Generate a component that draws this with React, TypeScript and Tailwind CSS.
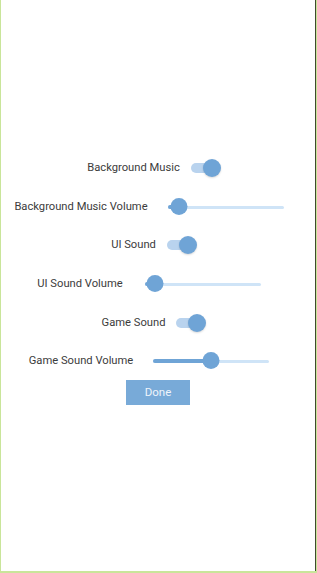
import { useState } from 'react';

function Toggle({ on }: { on: boolean }) {
  return (
    <div className="relative h-[18px] w-[30px] shrink-0">
      <div className="absolute left-[0px] top-[4px] h-[10px] w-[26px] rounded-full bg-[#b9d3ee]" />
      <div
        className={
          on
            ? 'absolute right-[0px] top-[0px] h-[18px] w-[18px] rounded-full bg-[#6fa4d6] shadow-[0_1px_2px_rgba(0,0,0,0.15)]'
            : 'absolute left-[0px] top-[0px] h-[18px] w-[18px] rounded-full bg-[#f5f5f5] shadow-[0_1px_2px_rgba(0,0,0,0.25)]'
        }
      />
    </div>
  );
}

function Slider({ value }: { value: number }) {
  const pct = value * 100;
  return (
    <div className="relative h-[18px] w-[116px] shrink-0">
      <div className="absolute left-0 right-0 top-[8px] h-[3px] rounded-full bg-[#cfe4f7]" />
      <div
        className="absolute left-0 top-[7px] h-[4px] rounded-full bg-[#6fa4d6]"
        style={{ width: `${pct}%` }}
      />
      <div
        className="absolute top-0 h-[17px] w-[17px] -translate-x-1/2 rounded-full bg-[#6fa4d6]"
        style={{ left: `${pct}%` }}
      />
    </div>
  );
}

export default function App() {
  const [bgMusic] = useState(true);
  const [uiSound] = useState(true);
  const [gameSound] = useState(true);

  return (
    <div className="h-[573px] w-full bg-[#c9e59a] pb-[2px] pl-[1px] pr-[1px]">
      <div className="h-full w-full border-r border-[#3f4a2c] bg-white">
        <div
          className="flex flex-col items-center pt-[159px] text-[11.2px] text-[#3c3c3c]"
          style={{ fontFamily: 'Roboto, "Liberation Sans", sans-serif' }}
        >
          <div className="flex h-[18px] items-center gap-[11px] pr-[8px]">
            <span>Background Music</span>
            <Toggle on={bgMusic} />
          </div>
          <div className="mt-[21px] flex h-[18px] items-center gap-[20px] pr-[18px]">
            <span>Background Music Volume</span>
            <Slider value={0.095} />
          </div>
          <div className="mt-[20px] flex h-[18px] items-center gap-[11px] pr-[8px]">
            <span>UI Sound</span>
            <Toggle on={uiSound} />
          </div>
          <div className="mt-[21px] flex h-[18px] items-center gap-[22px] pr-[18px]">
            <span>UI Sound Volume</span>
            <Slider value={0.087} />
          </div>
          <div className="mt-[21px] flex h-[18px] items-center gap-[11px] pr-[8px]">
            <span>Game Sound</span>
            <Toggle on={gameSound} />
          </div>
          <div className="mt-[20px] flex h-[18px] items-center gap-[20px] pr-[18px]">
            <span>Game Sound Volume</span>
            <Slider value={0.5} />
          </div>
          <button className="mt-[10px] h-[25px] w-[64px] bg-[#78aad8] text-[11.5px] text-[#eef4fb]">
            Done
          </button>
        </div>
      </div>
    </div>
  );
}
